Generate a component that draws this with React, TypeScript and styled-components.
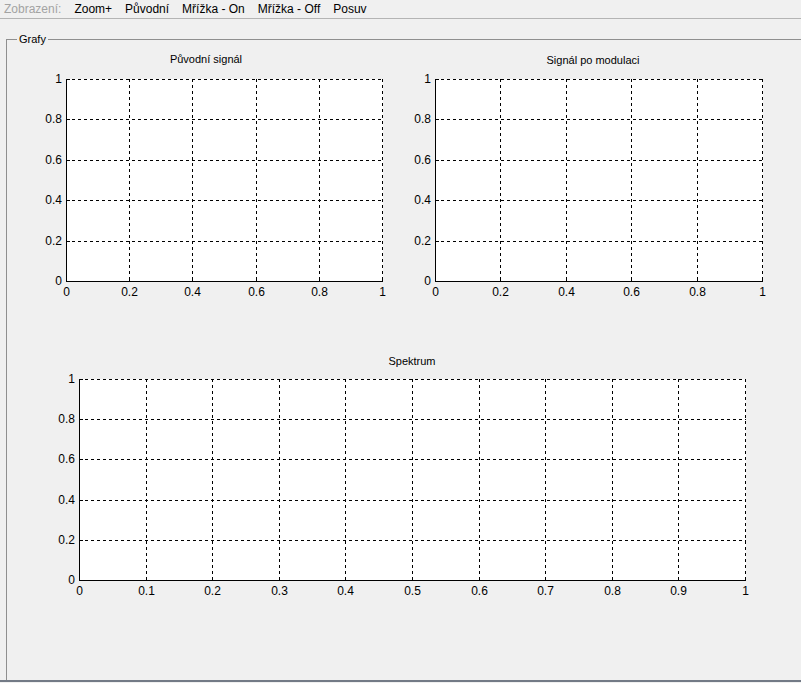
import styled, { createGlobalStyle } from "styled-components";

const GlobalStyle = createGlobalStyle`
    html, body {
        margin: 0;
        padding: 0;
        background: #f0f0f0;
    }
    body {
        font-family: "Liberation Sans", Arial, sans-serif;
    }
`;

const Window = styled.div`
    display: flex;
    flex-direction: column;
    height: 683px;
    overflow: hidden;
    background: #f0f0f0;
`;

const MenuBar = styled.div`
    display: flex;
    align-items: center;
    gap: 13px;
    height: 18px;
    padding-left: 4px;
    border-bottom: 1px solid #b4b4b4;
    font-size: 12px;
    flex-shrink: 0;
`;

const MenuItem = styled.span<{ $disabled?: boolean }>`
    color: ${(p) => (p.$disabled ? "#a3a3a3" : "#000")};
    line-height: 18px;
    white-space: nowrap;
`;

const Body = styled.div`
    flex: 1;
    overflow: hidden;
`;

const GroupBox = styled.fieldset`
    margin: 14px 0 0 6px;
    padding: 0;
    width: calc(100% + 20px);
    height: 700px;
    border: 1px solid #8f8f8f;
    box-sizing: border-box;
`;

const Legend = styled.legend`
    margin-left: 10px;
    padding: 0 2px;
    font-size: 11px;
    line-height: 13px;
    color: #000;
`;

const TopRow = styled.div`
    display: flex;
    gap: 5px;
    margin-top: 4px;
    padding-left: 29px;
`;

const BottomRow = styled.div`
    display: flex;
    margin-top: 50px;
    padding-left: 42px;
`;

const StatusEdge = styled.div`
    height: 2px;
    margin-bottom: 1px;
    background: #737a86;
    flex-shrink: 0;
`;

const ChartSvg = styled.svg`
    display: block;
    font-family: "Liberation Sans", Arial, sans-serif;
    flex-shrink: 0;
`;

type ChartProps = {
    width: number;
    height: number;
    plotW: number;
    plotH: number;
    xticks: string[];
    title: string;
    titleX: number;
    titleY: number;
};

const YTICKS = ["0", "0.2", "0.4", "0.6", "0.8", "1"];
const LEFT = 30;
const TOP = 29;

function Chart({ width, height, plotW, plotH, xticks, title, titleX, titleY }: ChartProps) {
    const right = LEFT + plotW;
    const bottom = TOP + plotH;
    const nx = xticks.length - 1;
    const ny = YTICKS.length - 1;
    const xs = xticks.map((_, i) => Math.round(LEFT + (i * plotW) / nx));
    const ys = YTICKS.map((_, i) => Math.round(bottom - (i * plotH) / ny));

    return (
        <ChartSvg width={width} height={height} viewBox={`0 0 ${width} ${height}`}>
            <rect x={LEFT} y={TOP} width={plotW + 1} height={plotH + 1} fill="#fff" />
            {/* grid */}
            {xs.slice(1).map((x, i) => (
                <line
                    key={"gx" + i}
                    x1={x + 0.5}
                    x2={x + 0.5}
                    y1={TOP}
                    y2={bottom}
                    stroke="#000"
                    strokeDasharray="3 3"
                    shapeRendering="crispEdges"
                />
            ))}
            {ys.slice(1).map((y, i) => (
                <line
                    key={"gy" + i}
                    x1={LEFT}
                    x2={right + 1}
                    y1={y + 0.5}
                    y2={y + 0.5}
                    stroke="#000"
                    strokeDasharray="3 3"
                    shapeRendering="crispEdges"
                />
            ))}
            {/* axes */}
            <line x1={LEFT + 0.5} x2={LEFT + 0.5} y1={TOP} y2={bottom + 1} stroke="#000" shapeRendering="crispEdges" />
            <line x1={LEFT} x2={right + 1} y1={bottom + 0.5} y2={bottom + 0.5} stroke="#000" shapeRendering="crispEdges" />
            {/* ticks */}
            {xs.map((x, i) => (
                <line key={"tx" + i} x1={x + 0.5} x2={x + 0.5} y1={bottom - 3} y2={bottom} stroke="#000" shapeRendering="crispEdges" />
            ))}
            {ys.map((y, i) => (
                <line key={"ty" + i} x1={LEFT} x2={LEFT + 4} y1={y + 0.5} y2={y + 0.5} stroke="#000" shapeRendering="crispEdges" />
            ))}
            {/* labels */}
            {YTICKS.map((t, i) => (
                <text key={"ly" + i} x={LEFT - 4} y={ys[i] + 4} fontSize={12} textAnchor="end" fill="#000">
                    {t}
                </text>
            ))}
            {xticks.map((t, i) => (
                <text key={"lx" + i} x={xs[i] + 0.5} y={bottom + 15} fontSize={12} textAnchor="middle" fill="#000">
                    {t}
                </text>
            ))}
            <text x={titleX} y={titleY} fontSize={11} textAnchor="middle" fill="#000">
                {title}
            </text>
        </ChartSvg>
    );
}

const X5 = ["0", "0.2", "0.4", "0.6", "0.8", "1"];
const X10 = ["0", "0.1", "0.2", "0.3", "0.4", "0.5", "0.6", "0.7", "0.8", "0.9", "1"];

export default function App() {
    return (
        <>
            <GlobalStyle />
            <Window>
                <MenuBar>
                    <MenuItem $disabled>Zobrazení:</MenuItem>
                    <MenuItem>Zoom+</MenuItem>
                    <MenuItem>Původní</MenuItem>
                    <MenuItem>Mřížka - On</MenuItem>
                    <MenuItem>Mřížka - Off</MenuItem>
                    <MenuItem>Posuv</MenuItem>
                </MenuBar>
                <Body>
                    <GroupBox>
                        <Legend>Grafy</Legend>
                        <TopRow>
                            <Chart
                                width={364}
                                height={250}
                                plotW={316}
                                plotH={202}
                                xticks={X5}
                                title="Původní signál"
                                titleX={170}
                                titleY={13}
                            />
                            <Chart
                                width={385}
                                height={250}
                                plotW={327}
                                plotH={202}
                                xticks={X5}
                                title="Signál po modulaci"
                                titleX={188}
                                titleY={14}
                            />
                        </TopRow>
                        <BottomRow>
                            <Chart
                                width={721}
                                height={255}
                                plotW={666}
                                plotH={201}
                                xticks={X10}
                                title="Spektrum"
                                titleX={363}
                                titleY={15}
                            />
                        </BottomRow>
                    </GroupBox>
                </Body>
                <StatusEdge />
            </Window>
        </>
    );
}
